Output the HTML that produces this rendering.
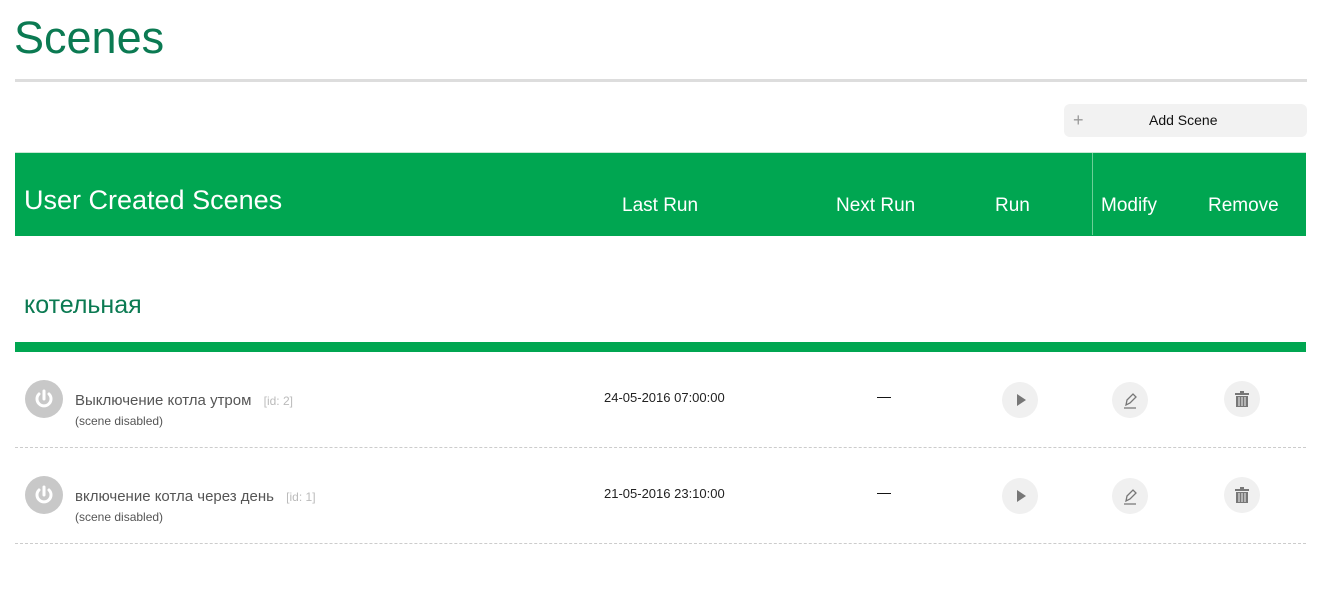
<!DOCTYPE html>
<html><head><meta charset="utf-8"><style>
body{margin:0;background:#fff;font-family:"Liberation Sans","DejaVu Sans",sans-serif;width:1326px;height:611px;position:relative;overflow:hidden}
.a{position:absolute}
.hd{color:#fff;font-size:19px;top:195px}
.circ{position:absolute;width:36px;height:36px;border-radius:50%;background:#f0f0f0}
.pw{position:absolute;left:25px;width:38px;height:38px;border-radius:50%;background:#c8c8c8}
.nm{font-size:15px;color:#555}
.id{font-size:12px;color:#bbb}
.sd{font-size:12px;color:#555}
.dt{font-size:13px;color:#222}
.dash{position:absolute;left:15px;width:1291px;border-top:1px dashed #ccc}
</style></head><body>
<div class="a" style="left:14px;top:12px;font-size:45px;color:#0b7a52">Scenes</div>
<div class="a" style="left:15px;top:79px;width:1292px;height:3px;background:#ddd"></div>
<div class="a" style="left:1064px;top:104px;width:243px;height:33px;border-radius:6px;background:#f2f2f2"></div>
<div class="a" style="left:1073px;top:110px;font-size:18px;color:#999">+</div>
<div class="a" style="left:1149px;top:112px;font-size:14px;color:#111">Add Scene</div>
<div class="a" style="left:15px;top:152px;width:1291px;height:83px;background:#00a651;border-top:1px solid #c8e8d4"></div>
<div class="a" style="left:1092px;top:153px;width:1px;height:82px;background:#6ccf97"></div>
<div class="a hd" style="left:24px;top:185px;font-size:27px">User Created Scenes</div>
<div class="a hd" style="left:622px">Last Run</div>
<div class="a hd" style="left:836px">Next Run</div>
<div class="a hd" style="left:995px">Run</div>
<div class="a hd" style="left:1101px">Modify</div>
<div class="a hd" style="left:1208px">Remove</div>
<div class="a" style="left:24px;top:291px;font-size:25px;color:#0b7a52">котельная</div>
<div class="a" style="left:15px;top:342px;width:1291px;height:10px;background:#00a651"></div>

<div class="pw" style="top:380px"><svg width="38" height="38" viewBox="0 0 38 38"><path d="M14 14a7 7 0 1 0 10 0" fill="none" stroke="#fff" stroke-width="3" stroke-linecap="round"/><path d="M19 11v8" stroke="#fff" stroke-width="3" stroke-linecap="round"/></svg></div>
<div class="a nm" style="left:75px;top:392px">Выключение котла утром <span class="id" style="margin-left:8px">[id: 2]</span></div>
<div class="a sd" style="left:75px;top:414px">(scene disabled)</div>
<div class="a dt" style="left:604px;top:390px">24-05-2016 07:00:00</div>
<div class="a" style="left:877px;top:388px;font-size:14px">—</div>
<div class="circ" style="left:1002px;top:382px"><svg width="36" height="36"><path d="M15 12l9 6-9 6z" fill="#777"/></svg></div>
<div class="circ" style="left:1112px;top:382px"><svg width="36" height="36"><path d="M14 23l1-5 6-6 3 3-6 6z M12 26h12" fill="none" stroke="#777" stroke-width="1.3"/></svg></div>
<div class="circ" style="left:1224px;top:381px"><svg width="36" height="36"><rect x="11" y="12" width="14" height="2" fill="#777"/><rect x="16" y="10" width="4" height="2" fill="#777"/><rect x="12" y="15" width="12" height="11" fill="#777"/><path d="M15 16v9M18 16v9M21 16v9" stroke="#f0f0f0"/></svg></div>
<div class="dash" style="top:447px"></div>

<div class="pw" style="top:476px"><svg width="38" height="38" viewBox="0 0 38 38"><path d="M14 14a7 7 0 1 0 10 0" fill="none" stroke="#fff" stroke-width="3" stroke-linecap="round"/><path d="M19 11v8" stroke="#fff" stroke-width="3" stroke-linecap="round"/></svg></div>
<div class="a nm" style="left:75px;top:488px">включение котла через день <span class="id" style="margin-left:8px">[id: 1]</span></div>
<div class="a sd" style="left:75px;top:510px">(scene disabled)</div>
<div class="a dt" style="left:604px;top:486px">21-05-2016 23:10:00</div>
<div class="a" style="left:877px;top:484px;font-size:14px">—</div>
<div class="circ" style="left:1002px;top:478px"><svg width="36" height="36"><path d="M15 12l9 6-9 6z" fill="#777"/></svg></div>
<div class="circ" style="left:1112px;top:478px"><svg width="36" height="36"><path d="M14 23l1-5 6-6 3 3-6 6z M12 26h12" fill="none" stroke="#777" stroke-width="1.3"/></svg></div>
<div class="circ" style="left:1224px;top:477px"><svg width="36" height="36"><rect x="11" y="12" width="14" height="2" fill="#777"/><rect x="16" y="10" width="4" height="2" fill="#777"/><rect x="12" y="15" width="12" height="11" fill="#777"/><path d="M15 16v9M18 16v9M21 16v9" stroke="#f0f0f0"/></svg></div>
<div class="dash" style="top:543px"></div>
</body></html>
